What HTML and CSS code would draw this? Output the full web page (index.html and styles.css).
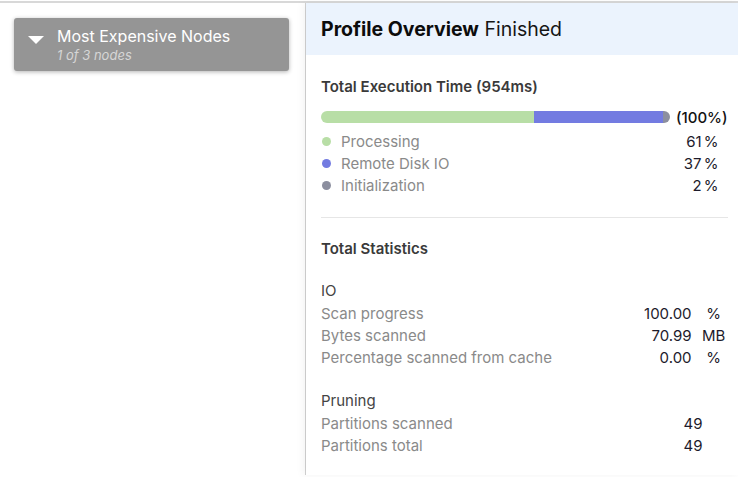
FILE: index.html
```html
<!DOCTYPE html>
<html>
<head>
<meta charset="utf-8">
<link rel="stylesheet" href="styles.css">
</head>
<body>
<div class="app">
  <aside class="left">
    <div class="card">
      <svg class="caret" width="16" height="8" viewBox="0 0 16 8"><path d="M0 0 H16 L8 8 Z" fill="#fff"/></svg>
      <div class="card-text">
        <div class="card-title">Most Expensive Nodes</div>
        <div class="card-sub">1 of 3 nodes</div>
      </div>
    </div>
  </aside>
  <main class="right">
    <header class="head"><b>Profile Overview</b> Finished</header>
    <section class="sec">
      <div class="sec-title">Total Execution Time (954ms)</div>
      <div class="bar-row">
        <div class="bar">
          <div class="seg green" style="width:61%"></div>
          <div class="seg blue" style="width:37%"></div>
          <div class="seg gray" style="width:2%"></div>
        </div>
        <span class="total">(100%)</span>
      </div>
      <div class="leg"><span class="dot green"></span><span class="lbl">Processing</span><span class="num">61</span><span class="unit">%</span></div>
      <div class="leg"><span class="dot blue"></span><span class="lbl">Remote Disk IO</span><span class="num">37</span><span class="unit">%</span></div>
      <div class="leg"><span class="dot gray"></span><span class="lbl">Initialization</span><span class="num">2</span><span class="unit">%</span></div>
    </section>
    <hr class="div">
    <section class="stats">
      <div class="sec-title">Total Statistics</div>
      <div class="group">IO</div>
      <div class="row"><span class="lbl">Scan progress</span><span class="num">100.00</span><span class="unit">%</span></div>
      <div class="row"><span class="lbl">Bytes scanned</span><span class="num">70.99</span><span class="unit">MB</span></div>
      <div class="row"><span class="lbl">Percentage scanned from cache</span><span class="num">0.00</span><span class="unit">%</span></div>
      <div class="group gap">Pruning</div>
      <div class="row"><span class="lbl">Partitions scanned</span><span class="num count">49</span></div>
      <div class="row"><span class="lbl">Partitions total</span><span class="num count">49</span></div>
    </section>
  </main>
</div>
</body>
</html>
```

FILE: styles.css
```css
* { box-sizing: border-box; }
html, body { margin: 0; padding: 0; background: #fff; }
body { font-family: Inter, "Noto Sans", sans-serif; color: #222; width: 738px; height: 477px; overflow: hidden; }
.app { margin-top: 1px; border-top: 2px solid #d8d8d8; display: flex; height: 474px; }
.left { width: 306px; flex: none; border-right: 1px solid #d2d2d2; padding: 15px 0 0 14px; }
.card { width: 275px; height: 53px; background: #959595; border-radius: 3px; box-shadow: 0 1px 4px rgba(0,0,0,0.3); display: flex; align-items: flex-start; padding: 7px 0 0 14px; }
.caret { margin: 11px 13px 0 0; flex: none; }
.card-title { color: #fff; font-size: 16px; line-height: 22px; }
.card-sub { color: #d6d6d6; font-size: 13px; font-style: italic; line-height: 17px; }
.right { flex: 1; box-shadow: -3px 0 8px rgba(0,0,0,0.05); }
.head { height: 52px; background: #ebf3fd; padding-left: 15px; font-size: 19.5px; line-height: 52px; color: #151515; }
.head b { font-weight: 700; color: #0c0c0c; }
.sec, .stats { padding: 0 11px 0 15px; }
.sec { padding-top: 22px; }
.sec-title { font-size: 15px; font-weight: 600; color: #3a3a3a; line-height: 20px; }
.bar-row { display: flex; align-items: center; height: 22px; margin-top: 9px; margin-bottom: 2px; }
.bar { width: 349px; height: 12px; border-radius: 6px; overflow: hidden; display: flex; }
.seg { height: 100%; }
.green { background: #b8dea6; }
.blue { background: #737be1; }
.gray { background: #8c8f9f; }
.total { margin-left: 6px; font-size: 15px; font-weight: 500; color: #111; }
.leg, .row { display: flex; align-items: center; height: 22px; font-size: 15px; }
.dot { width: 9px; height: 9px; border-radius: 50%; margin: 0 10px 0 1px; }
.lbl { flex: 1; color: #8a8a8a; }
.num { color: #1d1b2b; text-align: right; }
.leg .unit { width: 17px; text-align: right; color: #1d1b2b; margin-right: 9px; }
.div { border: 0; border-top: 1px solid #e6e6e6; margin: 21px 11px 0 15px; }
.stats .sec-title { margin-top: 21px; }
.group { font-size: 15px; color: #444; height: 22px; line-height: 22px; margin-top: 21px; }
.group.gap { margin-top: 22px; }
.stats .unit { width: 44px; text-align: center; color: #1d1b2b; margin-right: -8px; }
.stats .count { margin-right: 25px; }
```
